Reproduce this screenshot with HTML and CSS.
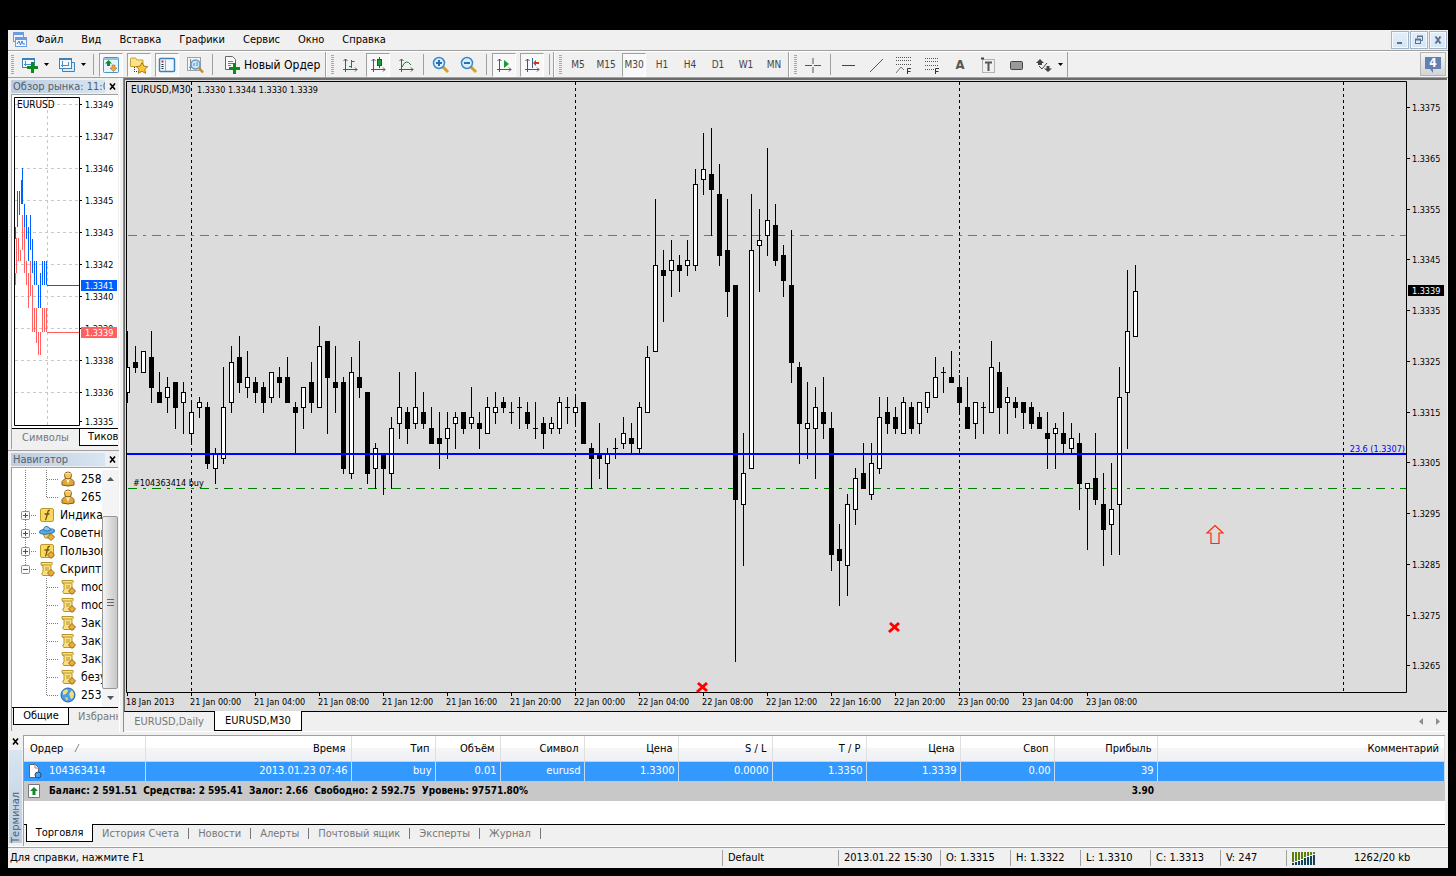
FILE: index.html
```
<!DOCTYPE html>
<html lang="ru">
<head>
<meta charset="utf-8">
<title>EURUSD,M30</title>
<link rel="stylesheet" href="styles.css">
</head>
<body>
<svg width="0" height="0" class="defs" aria-hidden="true">
  <defs>
    <symbol id="i-person" viewBox="0 0 16 16"><path d="M2 14V10.500L5 7.500h6l3 3V14q-6 2-12 0z" fill="#e0a838" stroke="#8a5a10"/><path d="M6 8l2 5 2-5z" fill="#fff3c0"/><circle cx="8" cy="4.500" r="3.500" fill="#f2c65a" stroke="#8a5a10"/><path d="M5 3q3-2 6 0" stroke="#fff0b0" fill="none"/></symbol>
    <symbol id="i-fx" viewBox="0 0 16 16"><rect x="1.500" y="1.500" width="13" height="13" rx="1.500" fill="#f7d964" stroke="#c09a28"/><path d="M6 13q1 0 1.500-3L9 4.500Q9.500 3 11 3.500M5.500 7h5" stroke="#7a5a08" stroke-width="1.400" fill="none"/></symbol>
    <symbol id="i-dia" viewBox="0 0 16 16"><path d="M12 8.500l3.500 3.500-3.500 3.500-3.500-3.500z" fill="#e8b03a" stroke="#9a6614"/></symbol>
    <symbol id="i-fxd" viewBox="0 0 16 16"><use href="#i-fx"/><use href="#i-dia"/></symbol>
    <symbol id="i-hat" viewBox="0 0 16 16"><path d="M4 8h8l-2 5H6z" fill="#f4d35c" stroke="#b58a20"/><ellipse cx="8" cy="6.500" rx="7.500" ry="2.500" fill="#58a9e0" stroke="#2a74b4" transform="rotate(-6 8 6.500)"/><path d="M4.500 5Q5 1 8 1.500T11.500 5Q8 7 4.500 5z" fill="#8ccbf0" stroke="#2a74b4"/><use href="#i-dia"/></symbol>
    <symbol id="i-script" viewBox="0 0 16 16"><path d="M2 1.500h11q1 2-1 3v8q2 0 2 2H4q-2-1-1-2.500l1-1V5Q1 4 2 1.500z" fill="#f8e084" stroke="#b8942a"/><path d="M2 4h10M6 7h4M6 9h4" stroke="#b8942a"/><use href="#i-dia"/></symbol>
    <symbol id="i-globe" viewBox="0 0 16 16"><circle cx="8" cy="8" r="7" fill="#4a9fe4" stroke="#2463a8"/><path d="M3 4l4-2 1 2-2 3-3 1zM9 7l3-4 2 4-1 4-2 1zM5 10l3 1-1 3z" fill="#f6dc7c"/></symbol>
    <symbol id="g-plus" viewBox="0 0 28 18"><path d="M13.500 0v18M19 9.500h6" stroke="#808080" stroke-dasharray="1 1"/><rect x="9.500" y="5.500" width="8" height="8" rx="1" fill="#fafafa" stroke="#8c8c8c"/><path d="M11 9.500h5M13.500 7v5" stroke="#2a50a8"/></symbol>
    <symbol id="g-minus" viewBox="0 0 28 18"><path d="M13.500 0v5M19 9.500h6" stroke="#808080" stroke-dasharray="1 1"/><rect x="9.500" y="5.500" width="8" height="8" rx="1" fill="#fafafa" stroke="#8c8c8c"/><path d="M11 9.500h5" stroke="#2a50a8"/></symbol>
    <symbol id="g-leaf2" viewBox="0 0 48 18"><path d="M13.500 0v18M34.500 0v18M35 9.500h11" stroke="#808080" stroke-dasharray="1 1"/></symbol>
    <symbol id="g-end2" viewBox="0 0 48 18"><path d="M13.500 0v18M34.500 0v9M35 9.500h11" stroke="#808080" stroke-dasharray="1 1"/></symbol>
    <symbol id="g-leaf" viewBox="0 0 48 18"><path d="M34.500 0v18M35 9.500h11" stroke="#808080" stroke-dasharray="1 1"/></symbol>
    <symbol id="g-end" viewBox="0 0 48 18"><path d="M34.500 0v9M35 9.500h11" stroke="#808080" stroke-dasharray="1 1"/></symbol>
    <symbol id="i-x" viewBox="0 0 7 7"><path d="M1 .5l5 6M6 .5l-5 6" stroke="#000" stroke-width="1.600"/></symbol>
    <symbol id="i-axes" viewBox="0 0 16 16"><path d="M3.500 2v13M1 12.500h14M1.500 4l2-2 2 2M13 10.500l2 2-2 2" stroke="#555" fill="none"/></symbol>
    <symbol id="i-caret" viewBox="0 0 5 3"><path d="M0 0h5L2.500 3z" fill="#000"/></symbol>
  </defs>
</svg>
<div class="app">
  <nav class="menubar">
    <svg class="logo" viewBox="0 0 16 16"><rect x="1.500" y=".5" width="10" height="9" fill="#e8f1fc" stroke="#6b9be0"/><path d="M1 2h11" stroke="#6b9be0" stroke-width="2"/><path d="M3 7l2-2 2 2" stroke="#6b9be0" fill="none"/><rect x="3.500" y="5.500" width="11" height="9" fill="#f2f7ff" stroke="#6b9be0"/><path d="M3 7h12" stroke="#6b9be0" stroke-width="2"/><path d="M5 12l2-3 1.500 4 1.500-4 1 3h2" stroke="#4a7ed0" fill="none"/></svg>
    <button>Файл</button><button>Вид</button><button>Вставка</button><button>Графики</button><button>Сервис</button><button>Окно</button><button>Справка</button>
    <div class="mdi">
      <button aria-label="Свернуть"><svg viewBox="0 0 12 12"><path d="M3 9h5" stroke="#5d7289" stroke-width="2"/></svg></button>
      <button aria-label="Восстановить"><svg viewBox="0 0 12 12"><path d="M4.500 4V2.500h5v4H8M4 2h6" stroke="#5d7289" fill="none"/><rect x="2.500" y="5.500" width="5" height="4" fill="none" stroke="#5d7289"/><path d="M2 5.500h6" stroke="#5d7289" stroke-width="2"/></svg></button>
      <button aria-label="Закрыть"><svg viewBox="0 0 12 12"><path d="M3.500 2.500l5 7M8.500 2.500l-5 7" stroke="#5d7289" stroke-width="2"/></svg></button>
    </div>
  </nav>

  <div class="toolbars">
    <div class="bar">
      <i class="grip"></i>
      <button class="tb drop" aria-label="Новый график"><svg class="ic18" viewBox="0 0 18 18"><rect x="1.500" y="2.500" width="12" height="9" fill="#f4faff" stroke="#3f82b8"/><path d="M1 3h13" stroke="#3f82b8" stroke-width="2"/><path d="M4.500 5v5M3 8.500h8" stroke="#4a90c0"/><path d="M10 6h3v4h4v3h-4v4h-3v-4H6v-3h4z" fill="#0a8a1a"/></svg><svg class="caret"><use href="#i-caret"/></svg></button>
      <button class="tb drop" aria-label="Профили"><svg class="ic18" viewBox="0 0 18 18"><path d="M4.500 6.500h12v9h-12z" fill="#dcecf8" stroke="#3f82b8"/><rect x="1.500" y="2.500" width="12" height="10" fill="#f4faff" stroke="#3f82b8"/><path d="M1 3h13" stroke="#3f82b8" stroke-width="2"/><path d="M4.500 5v6M3 9.500h8M10.500 6v4" stroke="#4a90c0"/></svg><svg class="caret"><use href="#i-caret"/></svg></button>
      <i class="sep"></i>
      <button class="tb on" aria-label="Обзор рынка"><svg class="ic18" viewBox="0 0 18 18"><rect x="1.500" y="1.500" width="15" height="15" rx="1" fill="#e6f4fc" stroke="#4a94c8"/><path d="M1.500 3h15" stroke="#8cc4e8" stroke-width="2"/><path d="M6.500 4L10 7.500H8V10H5V7.500H3z" fill="#128a2a"/><path d="M11.500 15.500L15 12h-2V9h-3v3H8z" fill="#e8a850" stroke="#9a5a10" stroke-width=".5"/></svg></button>
      <button class="tb on" aria-label="Навигатор"><svg class="ic18" viewBox="0 0 18 18"><path d="M.5 10.500V3q0-1 1-1h4l1.500 2h6v6.500z" fill="#fbe48a" stroke="#c8a030"/><path d="M4.500 11v5M6 15.500h3" stroke="#333" stroke-dasharray="1 1"/><path d="M12 6.500l1.800 3.600 4 .5-3 2.700.8 4-3.600-2-3.600 2 .8-4-3-2.700 4-.5z" fill="#fcc838" stroke="#b07a18"/></svg></button>
      <button class="tb on" aria-label="Терминал"><svg class="ic18" viewBox="0 0 18 18"><rect x="1.500" y="2.500" width="15" height="13" rx="1" fill="#f0f8ff" stroke="#3f82b8" stroke-width="1.500"/><path d="M3.500 5.500h2" stroke="#d02020" stroke-width="2"/><path d="M3.500 8.500h2M3.500 10.500h2M3.500 12.500h2" stroke="#222"/><path d="M7.500 4v11" stroke="#7ab4dc"/></svg></button>
      <button class="tb" aria-label="Тестер стратегий"><svg class="ic18" viewBox="0 0 18 18"><rect x="1.500" y="1.500" width="13" height="13" fill="#f4f4f4" stroke="#a0a0a0"/><path d="M4.500 3v11M3 11.500h9" stroke="#888"/><circle cx="9.500" cy="8.500" r="4.500" fill="#cbe6fa" stroke="#5f9ccc" stroke-width="1.500"/><path d="M13 12l4 4.500" stroke="#c88a28" stroke-width="2.500"/><path d="M8 7v3M11 6v4" stroke="#5a88b0"/></svg></button>
      <i class="sep"></i>
      <button class="tb order"><svg class="ic18" viewBox="0 0 18 18"><path d="M2.500.500h7l3 3v10h-10z" fill="#fafafa" stroke="#666"/><path d="M5 5.500h5M5 7.500h5M5 9.500h3" stroke="#777"/><path d="M10 7h3v4h4v3h-4v4h-3v-4H6v-3h4z" fill="#0a8a1a"/></svg>Новый Ордер</button>
    </div>
    <div class="bar">
      <i class="grip"></i>
      <button class="tb" aria-label="Бары"><svg class="ic16" viewBox="0 0 16 16"><use href="#i-axes"/><path d="M9.500 3v8M9.500 4.500h3M7 9.500h3" stroke="#2a7a3a"/></svg></button>
      <button class="tb on" aria-label="Свечи"><svg class="ic16" viewBox="0 0 16 16"><use href="#i-axes"/><path d="M9.500 0v11" stroke="#0a6a1a"/><rect x="7.500" y="2.500" width="4" height="6" fill="#1aa030" stroke="#0a6a1a"/></svg></button>
      <button class="tb" aria-label="Линия"><svg class="ic16" viewBox="0 0 16 16"><use href="#i-axes"/><path d="M4 10q4-9 9-2" stroke="#2a7a3a" fill="none"/></svg></button>
      <i class="sep"></i>
      <button class="tb" aria-label="Увеличить"><svg class="ic18" viewBox="0 0 18 18"><path d="M11 11l5 5" stroke="#d0a030" stroke-width="3"/><circle cx="7" cy="7" r="5.500" fill="#d8eefc" stroke="#3a88c8" stroke-width="1.500"/><path d="M4 7h6M7 4v6" stroke="#2a70b0" stroke-width="2"/></svg></button>
      <button class="tb" aria-label="Уменьшить"><svg class="ic18" viewBox="0 0 18 18"><path d="M11 11l5 5" stroke="#d0a030" stroke-width="3"/><circle cx="7" cy="7" r="5.500" fill="#d8eefc" stroke="#3a88c8" stroke-width="1.500"/><path d="M4 7h6" stroke="#2a70b0" stroke-width="2"/></svg></button>
      <i class="sep"></i>
      <button class="tb on" aria-label="Автопрокрутка"><svg class="ic16" viewBox="0 0 16 16"><use href="#i-axes"/><path d="M8 3l5 4-5 4z" fill="#1a9a30"/></svg></button>
      <button class="tb on" aria-label="Сдвиг графика"><svg class="ic16" viewBox="0 0 16 16"><use href="#i-axes"/><path d="M8.500 1v10" stroke="#2a6a9a"/><path d="M9 6l3-3v2h3v2h-3v2z" fill="#d03a10"/></svg></button>
      <i class="sep"></i>
    </div>
    <div class="bar tf">
      <i class="grip"></i>
      <button class="tb">M5</button><button class="tb">M15</button><button class="tb on">M30</button><button class="tb">H1</button><button class="tb">H4</button><button class="tb">D1</button><button class="tb">W1</button><button class="tb">MN</button>
    </div>
    <div class="bar">
      <i class="grip"></i>
      <button class="tb" aria-label="Перекрестие"><svg class="ic16" viewBox="0 0 16 16"><path d="M0 8.500h7M9 8.500h7M8 1v6M8 10v6" stroke="#555"/></svg></button>
      <i class="sep"></i>
      <button class="tb" aria-label="Горизонтальная линия"><svg class="ic16" viewBox="0 0 16 16"><path d="M2 8.500h13" stroke="#444"/></svg></button>
      <button class="tb" aria-label="Трендовая линия"><svg class="ic16" viewBox="0 0 16 16"><path d="M2 15L15 2" stroke="#555"/></svg></button>
      <button class="tb" aria-label="Канал Фибоначчи"><svg class="ic18" viewBox="0 0 18 18"><path d="M1 1.500h15M1 4.500h15M1 8.500h15" stroke="#555" stroke-dasharray="1 1"/><path d="M1 17l5-6 3 3" stroke="#777" fill="none"/><path d="M12.500 18v-5.500H16M12 15.500h3.500" stroke="#333" fill="none"/></svg></button>
      <button class="tb" aria-label="Линии Фибоначчи"><svg class="ic18" viewBox="0 0 18 18"><path d="M2 2.500h13M2 5.500h13M2 9.500h13M2 13.500h9" stroke="#555" stroke-dasharray="1 1"/><path d="M12.500 18v-5.500H16M12 15.500h3.500" stroke="#333" fill="none"/></svg></button>
      <button class="tb letter">A</button>
      <button class="tb" aria-label="Метка"><svg class="ic16" viewBox="0 0 16 16"><rect x="2.500" y="2.500" width="12" height="13" fill="none" stroke="#777" stroke-dasharray="1 1"/><path d="M5 5.500h7M8.500 5v9" stroke="#555" stroke-width="2"/><path d="M1 1.500h3" stroke="#444" stroke-width="2"/></svg></button>
      <button class="tb" aria-label="Прямоугольник"><svg class="ic16" viewBox="0 0 16 16"><rect x="2.500" y="4.500" width="12" height="8" rx="1" fill="#999" stroke="#444"/></svg></button>
      <button class="tb drop" aria-label="Стрелки"><svg class="ic18" viewBox="0 0 18 18"><path d="M5 3l4 4H7v2H3V7H1zM13 16l4-3.500h-2.500V10h-3v2.500H9z" fill="#444"/><path d="M4 10l3 3 5-6" stroke="#444" fill="none"/></svg><svg class="caret"><use href="#i-caret"/></svg></button>
    </div>
    <button class="notify" aria-label="Сообщения"><svg class="bubble" viewBox="0 0 18 18"><path d="M1 2h16v12h-8v4l-3-4H1z" fill="#6280b4"/></svg><span>4</span></button>
  </div>

  <div class="main">
    <aside class="side">
      <section class="dock market">
        <header><h2>Обзор рынка: 11:07</h2><button aria-label="Закрыть"><svg><use href="#i-x"/></svg></button></header>
        <div class="dockbody">
          <svg id="ticks" class="ticks" viewBox="12 95 106 333" preserveAspectRatio="xMinYMin meet"></svg>
          <div class="tabs"><button class="tab plain">Символы</button><button class="tab active">Тиковый график</button></div>
        </div>
      </section>
      <section class="dock navig">
        <header><h2>Навигатор</h2><button aria-label="Закрыть"><svg><use href="#i-x"/></svg></button></header>
        <div class="dockbody">
          <div class="treewrap">
            <ul class="tree">
              <li><svg class="g2"><use href="#g-leaf2"/></svg><svg class="ic16"><use href="#i-person"/></svg><span>258013</span></li>
              <li><svg class="g2"><use href="#g-end2"/></svg><svg class="ic16"><use href="#i-person"/></svg><span>265842</span></li>
              <li><svg class="g1"><use href="#g-plus"/></svg><svg class="ic16"><use href="#i-fx"/></svg><span>Индикаторы</span></li>
              <li><svg class="g1"><use href="#g-plus"/></svg><svg class="ic16"><use href="#i-hat"/></svg><span>Советники</span></li>
              <li><svg class="g1"><use href="#g-plus"/></svg><svg class="ic16"><use href="#i-fxd"/></svg><span>Пользовательские</span></li>
              <li><svg class="g1"><use href="#g-minus"/></svg><svg class="ic16"><use href="#i-script"/></svg><span>Скрипты</span></li>
              <li><svg class="g2"><use href="#g-leaf"/></svg><svg class="ic16"><use href="#i-script"/></svg><span>modify</span></li>
              <li><svg class="g2"><use href="#g-leaf"/></svg><svg class="ic16"><use href="#i-script"/></svg><span>modify</span></li>
              <li><svg class="g2"><use href="#g-leaf"/></svg><svg class="ic16"><use href="#i-script"/></svg><span>Закрыть</span></li>
              <li><svg class="g2"><use href="#g-leaf"/></svg><svg class="ic16"><use href="#i-script"/></svg><span>Закрыть</span></li>
              <li><svg class="g2"><use href="#g-leaf"/></svg><svg class="ic16"><use href="#i-script"/></svg><span>Закрыть</span></li>
              <li><svg class="g2"><use href="#g-leaf"/></svg><svg class="ic16"><use href="#i-script"/></svg><span>безубыток</span></li>
              <li><svg class="g2"><use href="#g-end"/></svg><svg class="ic16"><use href="#i-globe"/></svg><span>253</span></li>
            </ul>
            <div class="scroll">
              <button aria-label="Вверх"><svg viewBox="0 0 7 4"><path d="M0 4h7L3.500 0z" fill="#555"/></svg></button>
              <div class="track"><div class="thumb"><i></i><i></i><i></i></div></div>
              <button aria-label="Вниз"><svg viewBox="0 0 7 4"><path d="M0 0h7L3.500 4z" fill="#555"/></svg></button>
            </div>
          </div>
          <div class="tabs"><button class="tab active first">Общие</button><button class="tab next">Избранное</button></div>
        </div>
      </section>
    </aside>
    <main class="chartpane">
      <div class="chartbox"><svg id="chart" class="chart" viewBox="125 80 1322 631" preserveAspectRatio="xMinYMin meet"></svg></div>
      <div class="charttabs">
        <button class="ct">EURUSD,Daily</button><button class="ct active">EURUSD,M30</button>
        <div class="arrows"><svg viewBox="0 0 4 7"><path d="M4 0v7L0 3.500z" fill="#8c8c8c"/></svg><svg viewBox="0 0 4 7"><path d="M0 0v7l4-3.500z" fill="#8c8c8c"/></svg></div>
      </div>
    </main>
  </div>

  <section class="terminal">
    <div class="gutter"><button aria-label="Закрыть"><svg><use href="#i-x"/></svg></button><h2>Терминал</h2></div>
    <div class="termbody">
      <table>
        <colgroup><col class="c121"><col class="c206"><col class="c84"><col class="c65"><col class="c84"><col class="c94"><col class="c94"><col class="c94"><col class="c94"><col class="c94"><col class="c103"><col></colgroup>
        <thead><tr><th class="l">Ордер <svg class="sort" viewBox="0 0 6 8"><path d="M1 8L5 0" stroke="#888"/></svg></th><th>Время</th><th>Тип</th><th>Объём</th><th>Символ</th><th>Цена</th><th>S / L</th><th>T / P</th><th>Цена</th><th>Своп</th><th>Прибыль</th><th>Комментарий</th></tr></thead>
        <tbody>
          <tr class="sel"><td class="l"><svg class="ic16" viewBox="0 0 16 16"><path d="M3.500 1.500h6l3 3v10h-9z" fill="#fff" stroke="#666"/><path d="M9 1.500V5h4" fill="none" stroke="#888"/><circle cx="12" cy="12" r="3" fill="#4aa0e8" stroke="#1a4f8a"/></svg>104363414</td><td>2013.01.23 07:46</td><td>buy</td><td>0.01</td><td>eurusd</td><td>1.3300</td><td>0.0000</td><td>1.3350</td><td>1.3339</td><td>0.00</td><td>39</td><td></td></tr>
          <tr class="sum"><td class="l" colspan="10"><svg class="ic16" viewBox="0 0 16 16"><path d="M2.500 1.500h11v13h-11z" fill="#fff" stroke="#777"/><path d="M8 4l4 4H9.500v4h-3V8H4z" fill="#128a2a"/></svg>Баланс: 2 591.51&nbsp; Средства: 2 595.41&nbsp; Залог: 2.66&nbsp; Свободно: 2 592.75&nbsp; Уровень: 97571.80%</td><td>3.90</td><td></td></tr>
        </tbody>
      </table>
      <div class="termtabs"><button class="active">Торговля</button><button>История Счета</button><button>Новости</button><button>Алерты</button><button>Почтовый ящик</button><button>Эксперты</button><button>Журнал</button></div>
    </div>
  </section>

  <footer class="status">
    <span class="grow">Для справки, нажмите F1</span><span class="s116">Default</span><span class="s102">2013.01.22 15:30</span><span class="s70">O: 1.3315</span><span class="s70">H: 1.3322</span><span class="s70">L: 1.3310</span><span class="s70">C: 1.3313</span><span class="s66">V: 247</span><span class="s162"><svg class="net" viewBox="0 0 24 13"><path d="M1 0v10M4 0v9M7 0v8M10 0v7M13 0v5M16 0v4M19 0v3M22 0v2" stroke="#5f8010" stroke-width="2"/><path d="M1 11v2M4 10v3M7 9v4M10 8v5M13 6v7M16 5v8M19 4v9M22 3v10" stroke="#0f4460" stroke-width="2"/></svg>1262/20 kb</span>
  </footer>
</div>
<script src="chart.js"></script>
</body>
</html>
```
FILE: styles.css
```
* { box-sizing: border-box; }
html, body { height: 100%; margin: 0; }
body { background: #000; padding: 30px 8px 8px; font: 11px/14px "DejaVu Sans Condensed", "DejaVu Sans", sans-serif; color: #000; overflow: hidden; }
button { font: inherit; color: inherit; background: none; border: 0; padding: 0; margin: 0; white-space: nowrap; }
svg { display: block; flex: none; }
h2 { margin: 0; font: inherit; }
.defs { position: absolute; }
.app { height: 100%; background: #f0f0f0; display: flex; flex-direction: column; }
.ic16 { width: 16px; height: 16px; }
.ic18 { width: 18px; height: 18px; }

.menubar { display: flex; align-items: center; height: 21px; padding: 0 1px 0 4px; border-bottom: 1px solid #a0a0a0; gap: 18px; }
.logo { width: 16px; height: 16px; margin-right: -10px; }
.mdi { margin-left: auto; display: flex; gap: 1px; }
.mdi button { width: 18px; height: 18px; border: 1px solid #a4b4c8; background: linear-gradient(#e4eefa, #d4e6f6); display: grid; place-items: center; box-shadow: inset 0 0 0 1px #f4faff; }
.mdi svg { width: 12px; height: 12px; }

.toolbars { display: flex; align-items: stretch; height: 27px; border-top: 1px solid #fff; border-bottom: 1px solid #a0a0a0; padding-right: 2px; }
.bar { display: flex; align-items: center; gap: 4px; padding: 0 2px 0 3px; border-right: 1px solid #a0a0a0; }
.bar + .bar { padding-left: 4px; border-left: 1px solid #fff; }
.grip { width: 3px; height: 20px; background: repeating-linear-gradient(#a8a8a8 0 1px, #f0f0f0 1px 2px); }
.sep { width: 1px; height: 21px; margin: 0 1px; background: #a0a0a0; }
.tb { flex: none; width: 24px; height: 24px; display: flex; align-items: center; justify-content: center; }
.tb.on { border: 1px solid; border-color: #a0a0a0 #fff #fff #a0a0a0; background: #f8f8f8; }
.tb.drop { width: 33px; gap: 5px; }
.caret { width: 5px; height: 3px; }
.tb.order { width: 105px; padding-left: 5px; gap: 3px; font-size: 12px; justify-content: flex-start; }
.tf { color: #444; font-size: 10px; }
.letter { color: #555; font-size: 13px; font-weight: bold; }
.notify { margin-left: auto; width: 26px; height: 24px; border: 1px solid #b4b4b4; background: linear-gradient(#f4f4f4, #d4d4d4); display: grid; place-items: center; }
.notify > * { grid-area: 1 / 1; }
.bubble { width: 18px; height: 18px; }
.notify span { color: #fff; font-weight: bold; font-size: 12px; line-height: 14px; padding-bottom: 2px; }

.main { flex: 1; min-height: 0; display: flex; gap: 3px; }
.side { width: 112px; flex: none; display: flex; flex-direction: column; border-right: 1px solid #fff; }
.dock { display: flex; flex-direction: column; padding: 1px 1px 1px 3px; min-height: 0; }
.market { height: 373px; border-bottom: 1px solid #a0a0a0; }
.navig { flex: 1; }
.dock header { display: flex; align-items: center; justify-content: space-between; height: 14px; margin-bottom: 1px; }
.dock header h2 { width: 94px; height: 13px; line-height: 13px; overflow: hidden; white-space: nowrap; padding-left: 2px; color: #52606e; background: linear-gradient(90deg, #bccde0, #d8e5f2); }
.dock header svg, .gutter svg { width: 7px; height: 7px; }
.dock header button { padding-right: 2px; }
.dockbody { flex: 1; min-height: 0; background: #fff; border-top: 1px solid #a0a0a0; border-left: 1px solid #a0a0a0; overflow: hidden; display: flex; flex-direction: column; }
.ticks { width: 106px; height: 333px; }
.tabs { flex: 1; display: flex; align-items: flex-start; border-top: 1px solid #000; background: #f0f0f0; overflow: hidden; }
.tab { flex: none; height: 17px; padding: 0 8px; color: #777; }
.tab.plain { width: 67px; padding: 0; }
.tab.active { background: #fff; color: #000; border: solid #000; border-width: 0 1px 1px; margin-top: -1px; height: 18px; }
.tab.first { width: 56px; margin-left: 1px; }
.tab.next { padding-left: 9px; }
.treewrap { display: flex; height: 239px; flex: none; padding-top: 2px; }
.tree { list-style: none; margin: 0; padding: 0; width: 90px; overflow: hidden; line-height: 18px; font-size: 12px; }
.tree li { display: flex; align-items: center; height: 18px; gap: 5px; white-space: nowrap; }
.g1 { width: 28px; height: 18px; margin-right: -6px; }
.g2 { width: 48px; height: 18px; margin-right: -5px; }
.scroll { width: 16px; display: flex; flex-direction: column; background: #f4f4f4; }
.scroll button { height: 18px; display: grid; place-items: center; }
.scroll button svg { width: 7px; height: 4px; }
.track { flex: 1; padding-top: 28px; display: flex; }
.thumb { flex: 1; border: 1px solid #979797; border-radius: 2px; background: linear-gradient(90deg, #f4f4f4, #d8d8d8 60%, #c8c8c8); display: flex; flex-direction: column; gap: 2px; align-items: center; justify-content: center; }
.thumb i { width: 7px; height: 1px; background: #666; }

.chartpane { flex: 1; min-width: 0; display: flex; flex-direction: column; border-left: 1px solid #8c8c8c; }
.chartbox { flex: 1; min-height: 0; background: #dcdcdc; border-top: 2px solid #6c6c6c; border-left: 1px solid #6c6c6c; border-bottom: 1px solid #000; overflow: hidden; margin-right: 1px; }
.chart { width: 100%; height: auto; }
.chart text, .ticks text { font-size: 9px; }
.chart .name, .ticks .name { font-size: 10px; }
.charttabs { display: flex; height: 20px; align-items: flex-start; line-height: 19px; border-bottom: 1px solid #fff; }
.ct { width: 90px; height: 19px; color: #777; }
.ct.active { width: 88px; height: 20px; margin-top: -1px; background: #fff; color: #000; border: solid #000; border-width: 0 1px 1px; }
.arrows { margin: 6px 8px 0 auto; display: flex; gap: 13px; }
.arrows svg { width: 4px; height: 7px; }

.terminal { display: flex; height: 112px; margin-top: 3px; padding-right: 3px; border-bottom: 1px solid #fff; }
.gutter { width: 15px; padding: 3px 0; display: flex; flex-direction: column; align-items: center; gap: 5px; }
.gutter h2 { flex: 1; writing-mode: vertical-rl; transform: rotate(180deg); line-height: 13px; width: 13px; background: linear-gradient(#bccde0, #d8e5f2); color: #52606e; }
.termbody { flex: 1; min-width: 0; background: #fff; border-top: 1px solid #a0a0a0; border-left: 1px solid #a0a0a0; display: flex; flex-direction: column; justify-content: space-between; }
table { width: 100%; table-layout: fixed; border-collapse: collapse; }
.c121 { width: 121px; } .c206 { width: 206px; } .c84 { width: 84px; } .c65 { width: 65px; } .c94 { width: 94px; } .c103 { width: 103px; }
th { height: 25px; font-weight: normal; text-align: right; padding: 1px 5px 0; border-right: 1px solid #e0e0e0; border-bottom: 1px solid #d0d0d0; background: linear-gradient(#fff 45%, #f4f5f7 50%, #eef0f3); }
td { height: 20px; text-align: right; padding: 0 3px; }
.l { text-align: left; }
td.l { padding-left: 2px; }
th.l { padding-left: 6px; }
.sort { display: inline-block; width: 6px; height: 8px; margin-left: 8px; }
.sel td { background: #3399ff; color: #fff; border-right: 1px solid #c8dcf0; }
.sum td { background: #c8c8c8; font-weight: bold; font-size: 10px; }
td .ic16 { display: inline-block; vertical-align: middle; margin-right: 7px; }
.termtabs { display: flex; align-items: flex-start; height: 22px; border-top: 1px solid #000; background: #f0f0f0; padding-left: 2px; color: #777; line-height: 17px; }
.termtabs button { position: relative; height: 17px; padding: 0 10px 0 9px; }
.termtabs button + button::after { content: ""; position: absolute; right: 0; top: 3px; height: 11px; border-right: 1px solid #777; }
.termtabs .active { margin-top: -1px; width: 67px; height: 18px; padding: 0; background: #fff; color: #000; border: solid #000; border-width: 0 1px 1px; }

.status { display: flex; align-items: center; height: 21px; border-top: 1px solid #a0a0a0; padding-left: 2px; line-height: 16px; }
.status span { height: 16px; padding-left: 5px; border-left: 1px solid #a0a0a0; white-space: nowrap; }
.status .grow { flex: 1; border: 0; padding: 0; }
.status .s116 { width: 116px; } .status .s102 { width: 102px; } .status .s70 { width: 70px; } .status .s66 { width: 66px; }
.status .s162 { width: 162px; display: flex; align-items: center; gap: 38px; }
.net { width: 24px; height: 13px; }
```
FILE: chart.js
```
// Bars as [high, low, body top, body bottom, kind]; kind: 1 rising, 0 falling, 2 open equals close
const bars = [
[331,403,367,393,1],[346,373,362,368,0],[351,373,351,373,1],[331,403,357,388,0],[372,403,392,403,0],[377,413,387,398,1],[382,429,382,408,0],[382,434,392,403,1],
[400,442,412,434,1],[397,418,402,408,1],[402,469,407,464,0],[448,484,453,469,1],[367,464,407,459,1],[346,413,362,403,1],[336,393,357,383,0],[351,398,377,388,1],
[377,403,382,393,0],[382,413,387,403,0],[372,403,372,398,1],[367,398,377,383,0],[357,403,377,403,0],[402,454,407,413,0],[387,429,387,408,1],[362,413,382,403,0],
[326,408,346,408,1],[341,434,341,378,0],[346,413,382,388,0],[377,474,382,469,0],[357,479,372,474,1],[341,398,377,388,0],[392,484,392,474,0],[443,489,448,469,1],
[454,495,454,469,0],[417,489,428,474,1],[372,439,407,424,1],[407,444,412,429,0],[372,429,407,424,1],[392,429,412,424,0],[407,444,428,444,0],[412,469,438,444,0],
[412,459,428,439,1],[412,449,417,424,1],[412,434,412,429,0],[387,429,417,424,1],[412,449,423,429,0],[397,434,407,434,1],[392,424,407,413,1],[397,413,402,408,0],
[402,424,412,413,2],[397,429,407,408,2],[402,429,412,424,0],[402,439,428,429,2],[417,449,423,434,0],[417,434,423,429,1],[397,434,402,429,1],[397,424,407,408,2],
[397,424,407,413,1],[402,444,402,444,0],[443,489,448,459,0],[423,479,454,459,0],[448,489,454,464,1],[438,459,448,449,2],[417,449,433,444,1],[423,454,438,444,0],
[402,454,407,449,1],[346,413,357,413,1],[199,352,265,352,1],[250,322,270,276,0],[240,297,260,271,1],[255,292,265,271,0],[240,276,260,266,1],[169,271,184,266,1],
[133,195,169,180,1],[128,236,174,190,0],[164,266,194,256,0],[199,317,250,292,0],[285,662,285,500,0],[433,566,473,505,1],[194,469,250,469,1],[209,292,240,246,1],
[148,256,220,236,1],[204,266,225,261,0],[245,297,255,281,0],[230,383,285,363,0],[362,464,367,424,0],[382,459,423,429,1],[387,479,407,429,1],[377,439,412,424,0],
[412,571,428,555,0],[524,606,549,561,0],[494,596,504,566,1],[468,525,478,510,1],[443,489,473,489,0],[443,500,463,495,1],[397,474,417,469,1],[397,434,412,424,0],
[407,434,417,429,0],[397,434,402,434,1],[402,434,407,429,0],[402,434,402,424,1],[392,413,392,408,1],[357,398,377,398,1],[367,393,372,373,2],[351,383,377,383,0],
[375,413,387,403,0],[377,429,407,429,0],[402,439,402,424,1],[402,434,407,408,2],[341,413,367,413,1],[362,434,372,408,0],[387,434,397,403,1],[397,418,402,408,0],
[402,429,402,413,0],[402,429,407,424,0],[412,429,417,429,0],[412,469,433,439,0],[423,469,428,434,1],[412,454,433,444,0],[423,454,438,449,1],[433,510,443,484,0],
[483,550,483,489,1],[433,505,478,500,0],[473,566,504,530,0],[463,555,509,525,1],[367,555,397,505,1],[270,449,331,393,1],[265,337,291,337,1]
];

const rect = (x, y, w, h, fill) => `<rect x="${x}" y="${y}" width="${w}" height="${h}" fill="${fill}"/>`;
const line = (d, stroke, extra = "") => `<path d="${d}" stroke="${stroke}" fill="none" ${extra}/>`;
const text = (x, y, s, extra = "") => `<text x="${x}" y="${y}" ${extra}>${s}</text>`;

function drawChart() {
  let s = "";
  for (const x of [191, 575, 959, 1343]) s += line(`M${x + 0.5} 82V692`, "#000", 'stroke-dasharray="3 3"');
  s += line("M128 235.500H1406", "#ff4500", 'stroke-dasharray="9 6 3 6"');
  s += line("M128 488.500H1406", "#008000", 'stroke-dasharray="9 6 3 6"');
  bars.forEach(([hi, lo, top, bottom, kind], i) => {
    const x = 127 + i * 8;
    s += rect(x, hi, 1, lo - hi, "#000");
    const left = i ? x - 2 : x;
    const width = i ? 5 : 3;
    s += rect(left, top, width, bottom - top, "#000");
    if (kind === 1) s += rect(i ? left + 1 : left, top + 1, width - 2 + (i ? 0 : 1), bottom - top - 2, "#fff");
  });
  s += rect(127, 453, 1279, 2, "#00f");
  s += line("M126.500 692.500V81.500H1406.500V692.500Z", "#000");
  for (let i = 0; i < 12; i++) {
    const y = Math.round(107.2 + i * 50.73);
    s += rect(1407, y, 3, 1, "#000") + text(1412, y + 4, (1.3375 - i * 0.001).toFixed(4));
  }
  s += rect(1408, 285, 36, 11, "#000") + text(1412, 294, "1.3339", 'fill="#fff"');
  const days = ["18 Jan 2013"];
  for (const h of ["00", "04", "08", "12", "16", "20"]) days.push(`21 Jan ${h}:00`);
  for (const h of ["00", "04", "08", "12", "16", "20"]) days.push(`22 Jan ${h}:00`);
  for (const h of ["00", "04", "08"]) days.push(`23 Jan ${h}:00`);
  days.forEach((d, i) => { s += rect(127 + i * 64, 693, 1, 3, "#000") + text(126 + i * 64, 705, d); });
  s += text(131, 93, "EURUSD,M30", 'class="name"') + text(197, 93, "1.3330 1.3344 1.3330 1.3339");
  s += text(133, 486, "#104363414 buy");
  s += text(1405, 452, "23.6 (1.3307)", 'fill="#00f" text-anchor="end"');
  for (const [x, y] of [[702, 687], [894, 627]])
    s += line(`M${x - 4} ${y - 4}l9 8M${x + 5} ${y - 4}l-10 9`, "#f00", 'stroke-width="3"');
  s += line("M1215 525.500l8 7.500h-4v10.500h-8v-10.500h-4z", "#ff2a00", 'stroke-width="1.200"');
  document.getElementById("chart").innerHTML = s;
}

// Bid and ask ticks as [x, top, bottom]
const ask = [[15,227,239],[17,191,227],[19,191,215],[21,180,204],[22,168,204],[24,204,227],[26,215,239],[28,227,261],[30,215,250],[32,239,273],[34,261,285],[36,261,285],[38,285,308],[40,273,308],[42,261,285],[44,261,285],[46,261,285]];
const bid = [[15,273,285],[16,238,273],[18,238,261],[20,250,261],[22,215,250],[24,227,273],[26,261,285],[28,273,308],[30,261,296],[32,285,332],[34,308,332],[36,308,343],[38,332,355],[40,332,355],[42,308,332],[44,308,332],[46,308,332]];

function drawTicks() {
  let s = line("M47.500 98V425", "#c8c8c8", 'stroke-dasharray="3 3"');
  const labels = ["49", "47", "46", "45", "43", "42", "40", "39", "38", "36", "35"];
  labels.forEach((p, i) => {
    const y = i < 10 ? 104 + i * 32 : 421;
    if (i < 10) s += line(`M15 ${y + 0.5}H79`, "#c8c8c8", 'stroke-dasharray="3 3"');
    s += rect(79, y, 3, 1, "#000") + text(85, y + 4, "1.33" + p);
  });
  for (const [x, a, b] of ask) s += rect(x, a, 1, b - a, "#0060ff");
  for (const [x, a, b] of bid) s += rect(x, a, 1, b - a, "#ff6060");
  s += rect(47, 285, 32, 1, "#0060ff") + rect(47, 332, 32, 1, "#ff6060");
  s += line("M14.500 97.500H79.500V425.500H14.500Z", "#000");
  s += rect(81, 280, 36, 11, "#0060ff") + text(85, 289, "1.3341", 'fill="#fff"');
  s += rect(81, 327, 36, 11, "#ff6060") + text(85, 336, "1.3339", 'fill="#fff"');
  s += text(17, 108, "EURUSD", 'class="name"');
  document.getElementById("ticks").innerHTML = s;
}

drawChart();
drawTicks();
```
